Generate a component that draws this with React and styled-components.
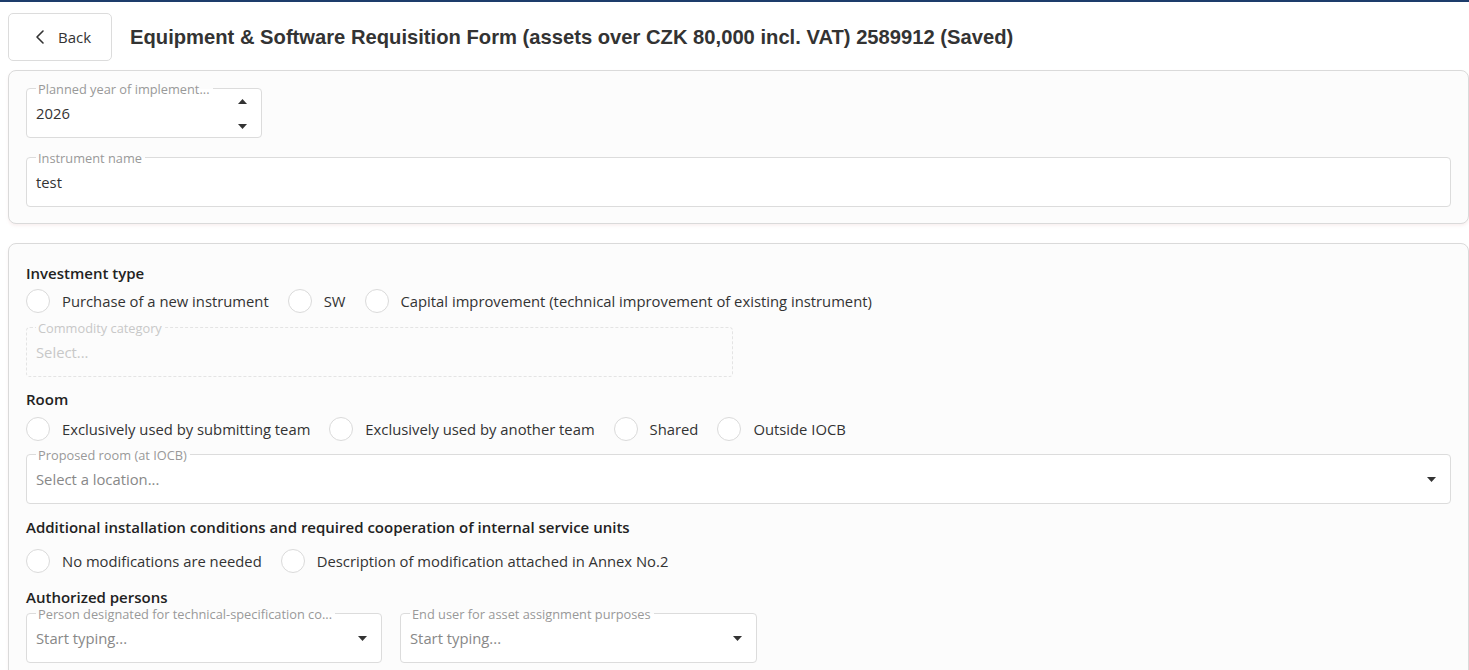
import styled, { createGlobalStyle } from "styled-components";
import { ChevronLeft } from "lucide-react";

const GlobalStyle = createGlobalStyle`
  html, body {
    margin: 0;
    padding: 0;
    overflow: hidden;
    background: #ffffff;
  }
  body {
    font-family: "Open Sans", "Noto Sans", sans-serif;
    color: #333;
  }
`;

const TopLine = styled.div`
  height: 2px;
  background: #1d3c6b;
`;

const Page = styled.div`
  padding: 11px 0 0 8px;
`;

const Header = styled.div`
  display: flex;
  align-items: center;
  gap: 18px;
  height: 48px;
`;

const BackButton = styled.button`
  display: flex;
  align-items: center;
  gap: 6px;
  box-sizing: border-box;
  width: 104px;
  height: 48px;
  padding: 0 0 0 19px;
  border: 1px solid #dcdcdc;
  border-radius: 5px;
  background: #fff;
  color: #333;
  font-family: "Open Sans", "Noto Sans", sans-serif;
  font-size: 15px;
  cursor: pointer;
`;

const Title = styled.h1`
  margin: 0;
  font-family: "Liberation Sans", Arial, sans-serif;
  font-size: 20.2px;
  font-weight: 700;
  color: #333;
`;

const Card = styled.div`
  margin-top: ${(p) => p.$top}px;
  box-sizing: border-box;
  border: 1px solid #dadada;
  border-radius: 8px;
  background: #fcfcfc;
  box-shadow: 0 2px 3px rgba(230, 200, 200, 0.25);
  padding: ${(p) => p.$pad};
  display: flex;
  flex-direction: column;
`;

const Field = styled.div`
  position: relative;
  box-sizing: border-box;
  width: ${(p) => (p.$width ? `${p.$width}px` : "100%")};
  height: 50px;
  margin-top: ${(p) => p.$top || 0}px;
  border: 1px ${(p) => (p.$disabled ? "dashed #e4e4e4" : "solid #dcdcdc")};
  border-radius: 4px;
  background: ${(p) => (p.$disabled ? "#fcfcfc" : "#fff")};
  display: flex;
  align-items: center;
  padding: 0 14px 0 9px;
`;

const FloatLabel = styled.span`
  position: absolute;
  left: 9px;
  top: -7px;
  padding: 0 3px 0 2px;
  font-size: 12.8px;
  line-height: 14px;
  color: ${(p) => (p.$disabled ? "#c8c8c8" : "#999")};
  background: linear-gradient(to bottom, #fcfcfc 50%, ${(p) => (p.$disabled ? "#fcfcfc" : "#fff")} 50%);
  white-space: nowrap;
`;

const Value = styled.span`
  flex: 1;
  font-size: 14.8px;
  color: ${(p) => (p.$placeholder ? (p.$disabled ? "#c8c8c8" : "#888") : "#333")};
`;

const Spinner = styled.div`
  display: flex;
  flex-direction: column;
  gap: 20px;
  margin-top: 1px;
`;

const SectionTitle = styled.div`
  margin-top: ${(p) => p.$top || 0}px;
  font-size: 15px;
  font-weight: 600;
  line-height: 20px;
  color: #222;
`;

const RadioRow = styled.div`
  display: flex;
  align-items: center;
  margin-top: ${(p) => p.$top}px;
  gap: 19px;
`;

const RadioItem = styled.label`
  display: flex;
  align-items: center;
  gap: 12px;
  font-size: 14.8px;
  color: #333;
  cursor: pointer;
`;

const Circle = styled.span`
  width: 24px;
  height: 24px;
  box-sizing: border-box;
  border: 1px solid #dadada;
  border-radius: 50%;
  background: #fff;
`;

const FieldRow = styled.div`
  display: flex;
  gap: 18px;
  margin-top: ${(p) => p.$top}px;
`;

const Caret = ({ up }) => (
  <svg width="9" height="5" viewBox="0 0 9 5">
    <path d={up ? "M0 5 L4.5 0 L9 5 Z" : "M0 0 L9 0 L4.5 5 Z"} fill="#333" />
  </svg>
);

const Radio = ({ label }) => (
  <RadioItem>
    <Circle />
    {label}
  </RadioItem>
);

const App = () => {
  return (
    <>
      <GlobalStyle />
      <TopLine />
      <Page>
        <Header>
          <BackButton>
            <ChevronLeft size={24} strokeWidth={1.6} />
            Back
          </BackButton>
          <Title>
            Equipment &amp; Software Requisition Form (assets over CZK 80,000 incl. VAT) 2589912 (Saved)
          </Title>
        </Header>

        <Card $top={9} $pad="17px 17px 16px 17px">
          <Field $width={236}>
            <FloatLabel>Planned year of implement...</FloatLabel>
            <Value>2026</Value>
            <Spinner>
              <Caret up />
              <Caret />
            </Spinner>
          </Field>
          <Field $top={19}>
            <FloatLabel>Instrument name</FloatLabel>
            <Value>test</Value>
          </Field>
        </Card>

        <Card $top={19} $pad="19px 17px 40px 17px">
          <SectionTitle>Investment type</SectionTitle>
          <RadioRow $top={6}>
            <Radio label="Purchase of a new instrument" />
            <Radio label="SW" />
            <Radio label="Capital improvement (technical improvement of existing instrument)" />
          </RadioRow>
          <Field $width={707} $top={14} $disabled>
            <FloatLabel $disabled>Commodity category</FloatLabel>
            <Value $placeholder $disabled>Select...</Value>
          </Field>

          <SectionTitle $top={12}>Room</SectionTitle>
          <RadioRow $top={8}>
            <Radio label="Exclusively used by submitting team" />
            <Radio label="Exclusively used by another team" />
            <Radio label="Shared" />
            <Radio label="Outside IOCB" />
          </RadioRow>
          <Field $top={13}>
            <FloatLabel>Proposed room (at IOCB)</FloatLabel>
            <Value $placeholder>Select a location...</Value>
            <Caret />
          </Field>

          <SectionTitle $top={13}>
            Additional installation conditions and required cooperation of internal service units
          </SectionTitle>
          <RadioRow $top={12}>
            <Radio label="No modifications are needed" />
            <Radio label="Description of modification attached in Annex No.2" />
          </RadioRow>

          <SectionTitle $top={14}>Authorized persons</SectionTitle>
          <FieldRow $top={6}>
            <Field $width={356}>
              <FloatLabel>Person designated for technical-specification co...</FloatLabel>
              <Value $placeholder>Start typing...</Value>
              <Caret />
            </Field>
            <Field $width={357}>
              <FloatLabel>End user for asset assignment purposes</FloatLabel>
              <Value $placeholder>Start typing...</Value>
              <Caret />
            </Field>
          </FieldRow>
        </Card>
      </Page>
    </>
  );
};

export default App;
